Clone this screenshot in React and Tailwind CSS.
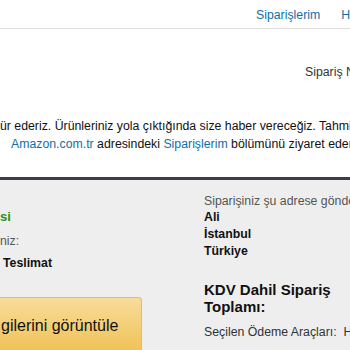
export default function App() {
  return (
    <div className="w-[350px] h-[350px] overflow-hidden bg-white text-[#111] text-[12.3px] whitespace-nowrap" style={{ fontFamily: '"Liberation Sans", Arial, sans-serif' }}>
      <div className="h-[29px] border-b border-[#dddddd] flex items-center pl-[256px] pt-[2px]">
        <span className="text-[#0f6fa8] leading-[17px]">Siparişlerim</span>
        <span className="w-px h-[14px] bg-[#dddddd] ml-[12px] mr-[9px]" />
        <span className="text-[#0f6fa8] leading-[17px]">Hesabım</span>
      </div>
      <div className="pl-[305px] mt-[35px] leading-[17px] text-[#333]">Sipariş Numarası</div>
      <div className="mt-[36px] leading-[18px]">
        <div>ür ederiz. Ürünleriniz yola çıktığında size haber vereceğiz. Tahmini</div>
        <div className="pl-[11px]">
          <span className="text-[#0f6fa8]">Amazon.com.tr</span> adresindeki{" "}
          <span className="text-[#0f6fa8]">Siparişlerim</span> bölümünü ziyaret ederek
        </div>
      </div>
      <div className="mt-[24px] border-t-[3px] border-[#3b4047] bg-[#eeeeee] h-[200px] flex">
        <div className="w-[204px] shrink-0 pt-[28px] flex flex-col items-start">
          <div className="leading-[17px] font-bold text-[#1f8f1f] text-[13px]">si</div>
          <div className="mt-[8px] leading-[17px] text-[#555]">niz:</div>
          <div className="mt-[5px] leading-[17px] font-bold pl-[3px]">Teslimat</div>
          <div className="mt-[25px] -ml-[20px] pl-[20px] pr-[23px] h-[58px] flex items-center rounded-[3px] border border-[#e2bd61] bg-linear-to-b from-[#f8dc9a] to-[#efc14e] text-[16px] text-[#111]">
            gilerini görüntüle
          </div>
        </div>
        <div className="pt-[14px] flex flex-col min-w-0">
          <div className="leading-[15px] text-[#555]">Siparişiniz şu adrese gönderilecek:</div>
          <div className="leading-[17px] font-bold">Ali</div>
          <div className="leading-[17px] font-bold">İstanbul</div>
          <div className="leading-[17px] font-bold">Türkiye</div>
          <div className="mt-[21px] leading-[17px] font-bold text-[15px]">KDV Dahil Sipariş</div>
          <div className="leading-[17px] font-bold text-[15px]">Toplamı:</div>
          <div className="mt-[9px] leading-[17px] text-[#333]">Seçilen Ödeme Araçları:&nbsp;&nbsp;Hediye</div>
        </div>
      </div>
    </div>
  );
}
